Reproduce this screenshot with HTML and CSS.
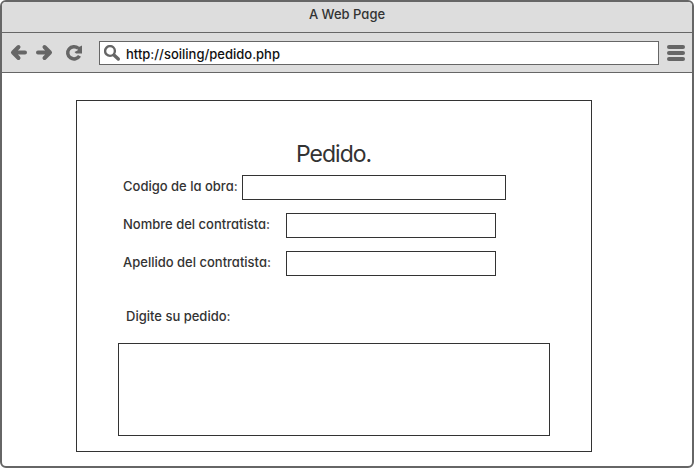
FILE: index.html
```html
<!DOCTYPE html>
<html lang="es">
<head>
<meta charset="utf-8">
<title>A Web Page</title>
<link rel="stylesheet" href="styles.css">
</head>
<body>
<div class="browser">
  <header class="titlebar">A Web Page</header>
  <nav class="toolbar">
    <svg class="nav-icons" width="97" height="39" viewBox="2 33 97 39">
      <g fill="none" stroke="#666" stroke-width="4" stroke-linecap="round" stroke-linejoin="round">
        <path d="M18.500 47l-5.500 5.500 5.500 5.500M14 52.500H25"/>
        <path d="M44.500 47l5.500 5.500-5.500 5.500M49 52.500H38"/>
        <path d="M79.500 55.800A6.300 6.100 0 1 1 78.300 48.300" stroke-width="3.500" stroke-linecap="butt"/>
      </g>
      <path d="M82 45.500V53.500H76L74.500 52L77.500 50.500L78 47.500Z" fill="#666"/>
    </svg>
    <div class="address">
      <svg class="search" width="18" height="18" viewBox="0 0 18 18">
        <circle cx="6" cy="6" r="4.900" fill="none" stroke="#666" stroke-width="2.400"/>
        <path d="M10.200 10.200L14.300 14" stroke="#666" stroke-width="3.400" stroke-linecap="round"/>
      </svg>
      <span class="url">http://soiling/pedido.php</span>
    </div>
    <div class="menu"><i></i><i></i><i></i></div>
  </nav>
  <main class="page">
    <form class="panel">
      <h1>Pedido.</h1>
      <div class="row"><label class="codigo" for="c">Codigo de la obra:</label><input class="wide" id="c"></div>
      <div class="row"><label class="nombre" for="n">Nombre del contratista:</label><input id="n"></div>
      <div class="row"><label class="apellido" for="a">Apellido del contratista:</label><input id="a"></div>
      <label class="digite" for="p">Digite su pedido:</label>
      <textarea id="p"></textarea>
    </form>
  </main>
</div>
</body>
</html>
```
FILE: styles.css
```css
* { box-sizing: border-box; }
body {
  margin: 0;
  background: #fff;
  color: #333;
  font-family: Inter, "Open Sans", sans-serif;
  font-feature-settings: "cv11";
  font-size: 13px;
  font-weight: 500;
}
.browser {
  width: 694px;
  height: 468px;
  border: 2px solid #666;
  border-radius: 6px;
  overflow: hidden;
}
.titlebar {
  height: 31px;
  background: #ddd;
  border-bottom: 1px solid #666;
  text-align: center;
  line-height: 25px;
  color: #333;
}
.toolbar {
  display: flex;
  height: 40px;
  background: #ddd;
  border-bottom: 1px solid #666;
}
.nav-icons { display: block; }
.address {
  display: flex;
  width: 560px;
  height: 24px;
  margin-top: 8px;
  padding-left: 4px;
  border: 1px solid #666;
  background: #fff;
  color: #111;
}
.search { margin-top: 3px; }
.url { margin-left: 4px; line-height: 25px; white-space: nowrap; }
.menu {
  display: flex;
  flex-direction: column;
  gap: 2px;
  margin: 12px 0 0 8px;
}
.menu i { width: 18px; height: 4px; border-radius: 2px; background: #666; }
.page { padding: 27px 0 0 74px; }
.panel {
  width: 516px;
  height: 352px;
  padding: 37px 0 0 41px;
  border: 1px solid #333;
}
h1 {
  margin: 0 0 5px 178px;
  font-size: 23px;
  line-height: 32px;
  font-weight: 400;
  letter-spacing: -1px;
}
.row {
  display: flex;
  height: 25px;
  margin: 0 0 13px 5px;
}
label { line-height: 22px; white-space: nowrap; }
.row label { width: 163px; }
.row .codigo { width: 119px; }
input, textarea {
  display: block;
  width: 210px;
  height: 25px;
  margin: 0;
  padding: 2px 4px;
  border: 1px solid #333;
  border-radius: 0;
  background: #fff;
  font: inherit;
  outline: 0;
  resize: none;
}
.wide { width: 264px; }
.digite { display: block; margin: 29px 0 14px 8px; height: 24px; }
textarea { width: 432px; height: 93px; }
```
